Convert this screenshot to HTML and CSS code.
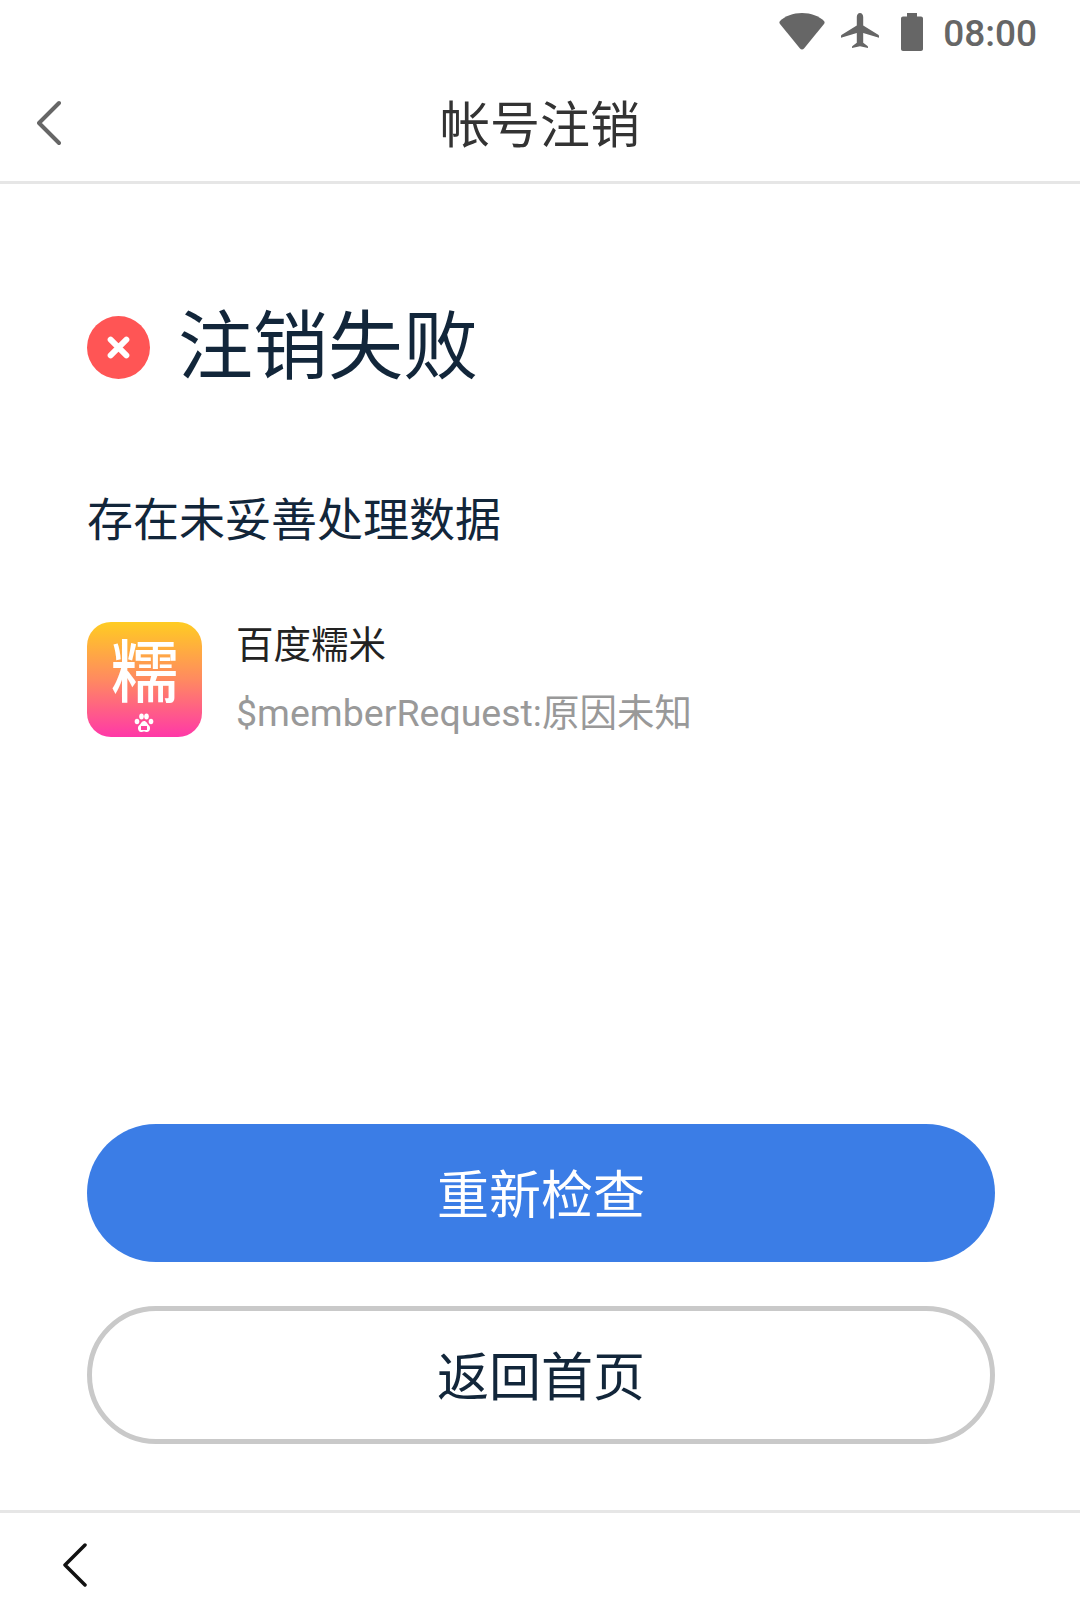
FILE: index.html
```html
<!DOCTYPE html>
<html lang="zh-CN">
<head>
<meta charset="utf-8">
<title>帐号注销</title>
<link rel="stylesheet" href="styles.css">
</head>
<body>
<div class="page">
  <div class="status">
    <svg class="wifi" viewBox="0 0 46 37" width="46" height="37"><path fill="#666" d="M23 0C14 0 6 3 1 8c-.8.8-.8 2 0 3l20 24.600c1 1.200 3 1.200 4 0L45 11c.8-1 .8-2.200 0-3C40 3 32 0 23 0z"/></svg>
    <svg class="plane" viewBox="0 0 38 38" width="38" height="38"><path fill="#666" d="M19 0c-2 0-3.200 2-3.200 4v8.500L.8 21.800c-.5.300-.8.800-.8 1.400v1.500l15.800-4.700v9.800l-4.300 3.200c-.3.200-.5.600-.5 1v1l8-1.800 8 1.800v-1c0-.4-.2-.8-.5-1l-4.300-3.200V20l15.800 4.700v-1.500c0-.6-.3-1.100-.8-1.400l-15-9.300V4c0-2-1.200-4-3.200-4z"/></svg>
    <svg class="battery" viewBox="0 0 22 38" width="22" height="38"><path fill="#666" d="M6 0h10v3.500h4c1.100 0 2 .9 2 2V36c0 1.100-.9 2-2 2H2c-1.100 0-2-.9-2-2V5.500c0-1.100.9-2 2-2h4z"/></svg>
    <span class="time">08:00</span>
  </div>
  <header class="nav">
    <svg class="nav-back" viewBox="0 0 24 48" width="24" height="48"><path fill="none" stroke="#666" stroke-width="4" stroke-linecap="round" stroke-linejoin="round" d="M22 4 2 24l20 20"/></svg>
    <h1 class="nav-title">帐号注销</h1>
  </header>
  <main class="content">
    <div class="result">
      <svg class="fail" viewBox="0 0 64 64" width="63" height="63"><circle cx="32" cy="32" r="32" fill="#ff5555"/><path fill="none" stroke="#fff" stroke-width="6" stroke-linecap="round" d="M24 24l16 16M40 24 24 40"/></svg>
      <h2 class="result-title">注销失败</h2>
    </div>
    <p class="reason">存在未妥善处理数据</p>
    <div class="app">
      <div class="app-icon">
        <span class="app-glyph">糯</span>
        <svg class="paw" viewBox="0 0 20 20" width="20" height="20"><g fill="#fff"><ellipse cx="3" cy="8.500" rx="2.300" ry="2.800"/><ellipse cx="7.500" cy="3.500" rx="2.300" ry="3"/><ellipse cx="12.500" cy="3.500" rx="2.300" ry="3"/><ellipse cx="17" cy="8.500" rx="2.300" ry="2.800"/><path fill-rule="evenodd" d="M10 8c-2.500 0-3 3-5 4.500S4 19 7 19c1.500 0 2-.5 3-.5s1.500.5 3 .5c3 0 4-4.500 2-6.500S12.500 8 10 8zM7 13h6v4H7z"/></g></svg>
      </div>
      <div class="app-text">
        <div class="app-name">百度糯米</div>
        <div class="app-note">$memberRequest:原因未知</div>
      </div>
    </div>
  </main>
  <div class="actions">
    <button class="btn btn-primary">重新检查</button>
    <button class="btn btn-outline">返回首页</button>
  </div>
  <footer class="bottom">
    <svg class="bottom-back" viewBox="0 0 24 48" width="24" height="48"><path fill="none" stroke="#111" stroke-width="3.500" stroke-linecap="round" stroke-linejoin="round" d="M22 4 2 24l20 20"/></svg>
  </footer>
</div>
</body>
</html>
```
FILE: styles.css
```css
* { box-sizing: border-box; }
html, body { margin: 0; padding: 0; background: #fff; }
body { font-family: "Noto Sans CJK SC", "Noto Sans", sans-serif; }
.page { width: 1080px; height: 1620px; display: flex; flex-direction: column; overflow: hidden; }

.status { height: 63px; margin-bottom: 3px; display: flex; align-items: center; justify-content: flex-end; padding-right: 43px; color: #666; }
.wifi { margin-right: 16px; }
.plane { margin-right: 22px; }
.battery { margin-right: 20px; }
.time { font-family: Roboto, sans-serif; font-size: 37px; font-weight: 500; line-height: 1; margin-top: 4px; }

.nav { height: 118px; display: flex; align-items: center; justify-content: center; border-bottom: 3px solid #e6e6e6; padding-left: 37px; }
.nav-back { flex: none; margin-top: -2px; }
.nav-title { flex: 1; margin: -6px 0 0 -24px; padding-right: 37px; text-align: center; font-size: 50px; font-weight: 400; color: #333; line-height: 1; }

.content { flex: 1; padding: 0 87px; }
.result { display: flex; align-items: center; margin-top: 120px; height: 72px; }
.fail { flex: none; margin-top: 15px; }
.result-title { margin: 0 0 0 28px; font-size: 75px; font-weight: 400; color: #12263a; line-height: 1; }
.reason { margin: 117px 0 0; font-size: 46px; line-height: 1; color: #12263a; }
.app { display: flex; margin-top: 83px; }
.app-icon { position: relative; width: 115px; height: 115px; border-radius: 24px; background: linear-gradient(180deg, #ffcc22 0%, #ff8a60 50%, #ff38a8 100%); display: flex; justify-content: center; align-items: flex-start; }
.app-glyph { font-size: 68px; font-weight: 500; line-height: 1; color: #fff; margin-top: 12px; }
.paw { position: absolute; left: 47px; bottom: 4px; }
.app-text { margin-left: 34px; }
.app-name { font-size: 37.500px; line-height: 1; color: #222; margin-top: 1px; }
.app-note { font-family: Roboto, "Noto Sans CJK SC", sans-serif; font-size: 37.500px; line-height: 1; color: #999; margin-top: 34px; }

.actions { display: flex; flex-direction: column; gap: 44px; padding: 0 87px; margin-bottom: 66px; }
.btn { width: 908px; height: 138px; border-radius: 69px; font-family: inherit; font-size: 52px; font-weight: 400; display: flex; align-items: center; justify-content: center; padding: 0 0 4px; }
.btn-primary { background: #3b7de6; color: #fff; border: 0; }
.btn-outline { background: #fff; color: #12263a; border: 5px solid #c9c9c9; }

.bottom { height: 110px; border-top: 3px solid #e6e6e6; padding: 28px 0 0 63px; }
.bottom-back { display: block; }
```
